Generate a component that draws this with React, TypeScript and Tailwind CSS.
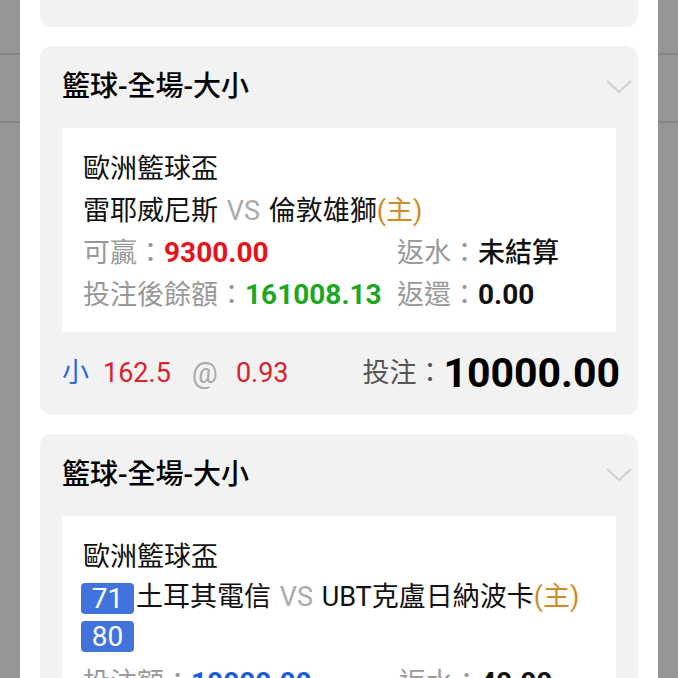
const font = { fontFamily: "Roboto, 'Noto Sans CJK TC', sans-serif" };

const Chevron = () => (
    <svg width="26" height="14" viewBox="0 0 26 14" fill="none">
        <path d="M1 1 L13 12 L25 1" stroke="#cfcfcf" strokeWidth="2" />
    </svg>
);

const CardHeader = () => (
    <div className="h-[82px] flex items-center justify-between pl-[22px] pr-[6px]">
        <span className="text-[28px] text-black font-medium">籃球-全場-大小</span>
        <Chevron />
    </div>
);

const App = () => {
    return (
        <div className="relative h-[678px] w-[678px] overflow-hidden bg-[#959595]" style={font}>
            {/* page behind the overlay */}
            <div className="h-[55px] border-b-2 border-[#858585]" />
            <div className="h-[68px] border-b-2 border-[#858585]" />

            <div className="absolute inset-y-0 left-[20px] right-[20px] bg-white px-[20px] flex flex-col gap-[19px]">
                <div className="mt-[-54px] h-[81px] shrink-0 rounded-[12px] bg-[#f2f2f2]" />

                <div className="shrink-0 rounded-[12px] bg-[#f2f2f2]">
                    <CardHeader />
                    <div className="mx-[22px] bg-white px-[21px] pt-[20px] pb-[16px] text-[27px] leading-[42px]">
                        <div className="text-[#111]">歐洲籃球盃</div>
                        <div className="text-[#111]">
                            雷耶威尼斯 <span className="text-[#aaaaaa] mx-[2px]">VS</span> 倫敦雄獅<span className="text-[#d08a2a]">(主)</span>
                        </div>
                        <div className="grid grid-cols-[314px_1fr]">
                            <div className="text-[#999]">
                                可贏：<span className="text-[28px] font-bold text-[#e8121d]">9300.00</span>
                            </div>
                            <div className="text-[#999]">
                                返水：<span className="font-medium text-[#111]">未結算</span>
                            </div>
                        </div>
                        <div className="grid grid-cols-[314px_1fr]">
                            <div className="text-[#999] whitespace-nowrap">
                                投注後餘額：<span className="text-[28px] font-bold text-[#1fa61f]">161008.13</span>
                            </div>
                            <div className="text-[#999]">
                                返還：<span className="text-[28px] font-bold text-[#111]">0.00</span>
                            </div>
                        </div>
                    </div>
                    <div className="h-[83px] flex items-center justify-between pl-[22px] pr-[18px] text-[27px]">
                        <div className="flex items-center">
                            <span className="text-[#2d6bd6]">小</span>
                            <span className="ml-[14px] text-[#d9232d]">162.5</span>
                            <span className="ml-[21px] text-[29px] text-[#aaaaaa]">@</span>
                            <span className="ml-[18px] text-[#d9232d]">0.93</span>
                        </div>
                        <div className="flex items-center">
                            <span className="text-[#555]">投注：</span>
                            <span className="text-[41px] font-bold text-black">10000.00</span>
                        </div>
                    </div>
                </div>

                <div className="shrink-0 rounded-[12px] bg-[#f2f2f2]">
                    <CardHeader />
                    <div className="mx-[22px] bg-white px-[19px] pt-[20px] pb-[16px] text-[27px] leading-[42px]">
                        <div className="pl-[2px] text-[#111]">歐洲籃球盃</div>
                        <div className="text-[#111] leading-[38px]">
                            <span className="inline-block w-[53px] h-[31px] mr-[2px] rounded-[4px] bg-[#4272dc] text-white text-center text-[28px] leading-[31px] align-middle">71</span>
                            土耳其電信 <span className="text-[#aaaaaa] mx-[2px]">VS</span> UBT克盧日納波卡<span className="text-[#d08a2a]">(主)</span>
                        </div>
                        <div className="leading-[38px]">
                            <span className="inline-block w-[53px] h-[31px] rounded-[4px] bg-[#4272dc] text-white text-center text-[28px] leading-[31px] align-middle">80</span>
                        </div>
                        <div className="mt-[8px] grid grid-cols-[316px_1fr] pl-[2px]">
                            <div className="text-[#999]">
                                投注額：<span className="text-[28px] font-bold text-[#1a5fd6]">10000.00</span>
                            </div>
                            <div className="text-[#999]">
                                返水：<span className="text-[28px] font-bold text-[#111]">40.00</span>
                            </div>
                        </div>
                    </div>
                </div>
            </div>
        </div>
    );
};

export default App;
